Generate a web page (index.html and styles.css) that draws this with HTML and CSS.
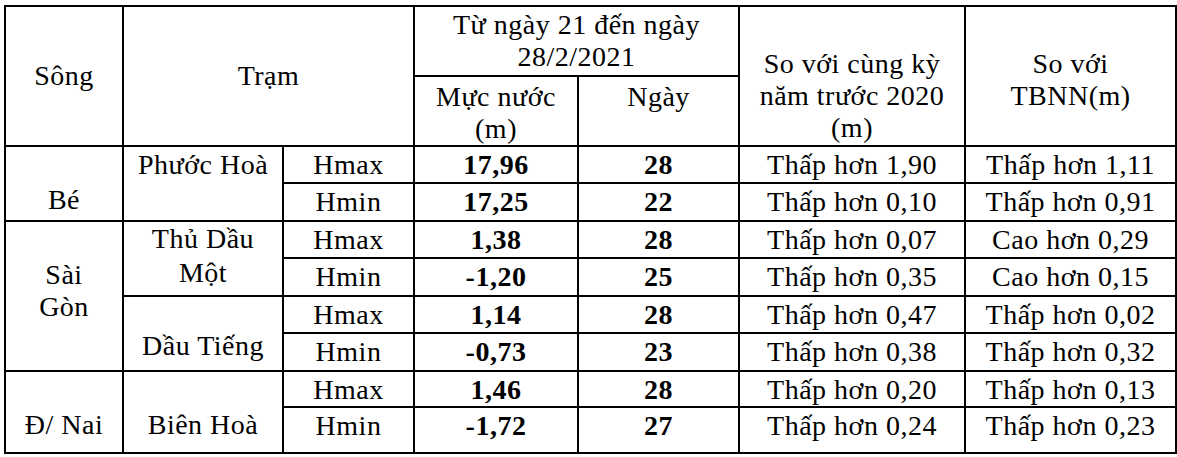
FILE: index.html
```html
<!DOCTYPE html>
<html lang="vi">
<head>
<meta charset="utf-8">
<title>Mực nước</title>
<link rel="stylesheet" href="styles.css">
</head>
<body>
<table class="t">
  <colgroup>
    <col class="c-song">
    <col class="c-tram">
    <col class="c-h">
    <col class="c-mn">
    <col class="c-ngay">
    <col class="c-cky">
    <col class="c-tbnn">
  </colgroup>
  <thead>
    <tr class="h1">
      <th rowspan="2" class="mid">Sông</th>
      <th rowspan="2" colspan="2" class="mid">Trạm</th>
      <th colspan="2" class="mid">Từ ngày 21 đến ngày<br>28/2/2021</th>
      <th rowspan="2" class="cmp">So với cùng kỳ<br>năm trước 2020<br>(m)</th>
      <th rowspan="2" class="cmp">So với<br>TBNN(m)</th>
    </tr>
    <tr class="h2">
      <th class="sub">Mực nước<br>(m)</th>
      <th class="sub">Ngày</th>
    </tr>
  </thead>
  <tbody>
    <tr class="r1">
      <td rowspan="2" class="low">Bé</td>
      <td rowspan="2">Phước Hoà</td>
      <td>Hmax</td><td class="b">17,96</td><td class="b">28</td>
      <td>Thấp hơn 1,90</td><td>Thấp hơn 1,11</td>
    </tr>
    <tr class="r2">
      <td>Hmin</td><td class="b">17,25</td><td class="b">22</td>
      <td>Thấp hơn 0,10</td><td>Thấp hơn 0,91</td>
    </tr>
    <tr class="r1">
      <td rowspan="4" class="low">Sài<br>Gòn</td>
      <td rowspan="2" class="tall">Thủ Dầu<br>Một</td>
      <td>Hmax</td><td class="b">1,38</td><td class="b">28</td>
      <td>Thấp hơn 0,07</td><td>Cao hơn 0,29</td>
    </tr>
    <tr class="r2">
      <td>Hmin</td><td class="b">-1,20</td><td class="b">25</td>
      <td>Thấp hơn 0,35</td><td>Cao hơn 0,15</td>
    </tr>
    <tr class="r1">
      <td rowspan="2" class="low2">Dầu Tiếng</td>
      <td>Hmax</td><td class="b">1,14</td><td class="b">28</td>
      <td>Thấp hơn 0,47</td><td>Thấp hơn 0,02</td>
    </tr>
    <tr class="r2">
      <td>Hmin</td><td class="b">-0,73</td><td class="b">23</td>
      <td>Thấp hơn 0,38</td><td>Thấp hơn 0,32</td>
    </tr>
    <tr class="r3">
      <td rowspan="2" class="low">Đ/ Nai</td>
      <td rowspan="2" class="low">Biên Hoà</td>
      <td>Hmax</td><td class="b">1,46</td><td class="b">28</td>
      <td>Thấp hơn 0,20</td><td>Thấp hơn 0,13</td>
    </tr>
    <tr class="r4">
      <td>Hmin</td><td class="b">-1,72</td><td class="b">27</td>
      <td>Thấp hơn 0,24</td><td>Thấp hơn 0,23</td>
    </tr>
  </tbody>
</table>
</body>
</html>
```
FILE: styles.css
```css
html, body {
  background: #fff;
}
body {
  margin: 0;
  padding: 5px 0 0 4px;
  font-family: "Liberation Serif", "Times New Roman", serif;
  font-size: 28px;
  line-height: 32px;
  color: #000;
}
.t {
  border-collapse: collapse;
  table-layout: fixed;
  width: 1171px;
}
.c-song { width: 118px; }
.c-tram { width: 160px; }
.c-h { width: 131px; }
.c-mn { width: 164px; }
.c-ngay { width: 161px; }
.c-cky { width: 226px; }
.c-tbnn { width: 211px; }

.t th,
.t td {
  border: 2px solid #000;
  padding: 2px 0 0;
  text-align: center;
  vertical-align: top;
  font-weight: normal;
  white-space: nowrap;
  letter-spacing: 0.5px;
  font-family: "Liberation Serif", "Times New Roman", serif;
}
.h1 { height: 70px; }
.h2 { height: 70px; }
.r1 { height: 37px; }
.r2 { height: 38px; }
.r3 { height: 36px; }
.r4 { height: 46px; }

.t th.mid { vertical-align: middle; padding: 0; }
.t th.sub { padding-top: 4px; }
.t th.cmp { padding-top: 41px; }
.t td.low { padding-top: 37px; }
.t td.low2 { padding-top: 33px; }
.t td.tall { padding-top: 0; line-height: 34px; }
.t td.b { font-weight: bold; }
```
